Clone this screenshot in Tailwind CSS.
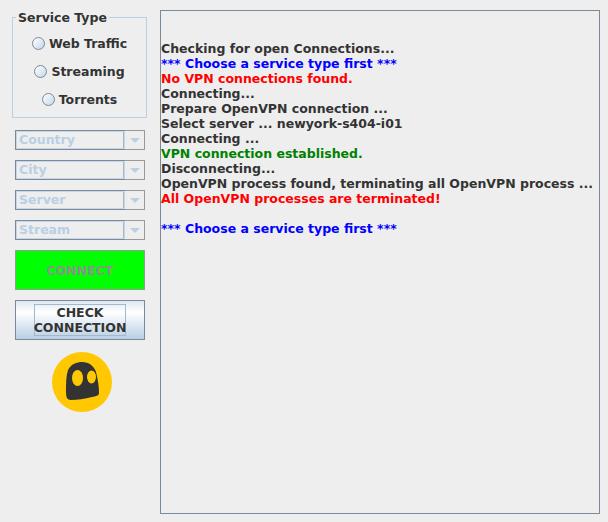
<!DOCTYPE html>
<html lang="en">
<head>
  <meta charset="UTF-8" />
  <title>VPN Client</title>
  <script src="https://cdn.jsdelivr.net/npm/@tailwindcss/browser@4"></script>
</head>
<body class="bg-[#eeeeee] w-[608px] h-[522px] overflow-hidden font-['DejaVu_Sans',sans-serif] font-bold text-[12.5px] leading-[15px] text-[#333333]">
  <div class="flex items-start">

    <aside class="w-[160px] shrink-0 flex flex-col items-center">
      <fieldset class="mt-[10px] ml-[-1px] w-[135px] h-[108px] border border-[#b8cfe5] flex flex-col">
        <legend class="ml-[3px] px-[2px] h-[15px]">Service Type</legend>
        <label class="flex items-center justify-center gap-[4px] mt-[11px] h-[15px]">
          <span class="w-[13px] h-[13px] rounded-full border border-[#7a8a99] bg-gradient-to-br from-[#ffffff] to-[#c4d6e8]"></span>Web Traffic
        </label>
        <label class="flex items-center justify-center gap-[4px] mt-[13px] h-[15px]">
          <span class="w-[13px] h-[13px] rounded-full border border-[#7a8a99] bg-gradient-to-br from-[#ffffff] to-[#c4d6e8]"></span>Streaming
        </label>
        <label class="flex items-center justify-center gap-[4px] mt-[13px] h-[15px]">
          <span class="w-[13px] h-[13px] rounded-full border border-[#7a8a99] bg-gradient-to-br from-[#ffffff] to-[#c4d6e8]"></span>Torrents
        </label>
      </fieldset>

      <div class="mt-[12px] w-[130px] flex flex-col gap-[10px] text-[#b8cfe5]">
        <div class="flex h-[20px] w-[130px]">
          <div class="flex-1 border border-[#7a8a99] border-r-0 pl-[3px] pb-[1px] flex items-center shadow-[inset_0_0_0_1px_#c4d6e8,inset_-1px_0_0_1px_#a3b8cc]">Country</div>
          <div class="w-[20px] border border-[#999999] border-l-0 flex items-center justify-center"><span class="w-0 h-0 border-x-[5px] border-x-transparent border-t-[5px] border-t-[#b8cfe5]"></span></div>
        </div>
        <div class="flex h-[20px] w-[130px]">
          <div class="flex-1 border border-[#7a8a99] border-r-0 pl-[3px] pb-[1px] flex items-center shadow-[inset_0_0_0_1px_#c4d6e8,inset_-1px_0_0_1px_#a3b8cc]">City</div>
          <div class="w-[20px] border border-[#999999] border-l-0 flex items-center justify-center"><span class="w-0 h-0 border-x-[5px] border-x-transparent border-t-[5px] border-t-[#b8cfe5]"></span></div>
        </div>
        <div class="flex h-[20px] w-[130px]">
          <div class="flex-1 border border-[#7a8a99] border-r-0 pl-[3px] pb-[1px] flex items-center shadow-[inset_0_0_0_1px_#c4d6e8,inset_-1px_0_0_1px_#a3b8cc]">Server</div>
          <div class="w-[20px] border border-[#999999] border-l-0 flex items-center justify-center"><span class="w-0 h-0 border-x-[5px] border-x-transparent border-t-[5px] border-t-[#b8cfe5]"></span></div>
        </div>
        <div class="flex h-[20px] w-[130px]">
          <div class="flex-1 border border-[#7a8a99] border-r-0 pl-[3px] pb-[1px] flex items-center shadow-[inset_0_0_0_1px_#c4d6e8,inset_-1px_0_0_1px_#a3b8cc]">Stream</div>
          <div class="w-[20px] border border-[#999999] border-l-0 flex items-center justify-center"><span class="w-0 h-0 border-x-[5px] border-x-transparent border-t-[5px] border-t-[#b8cfe5]"></span></div>
        </div>
      </div>

      <button class="mt-[10px] w-[130px] h-[40px] bg-[#00ff00] border border-[#999999] text-[#8f8f8f] font-bold">CONNECT</button>

      <button class="mt-[10px] w-[130px] h-[40px] border border-[#7a8a99] bg-gradient-to-b from-[#dde8f3] via-[#ffffff] via-30% to-[#b8cfe5] flex items-center justify-center font-bold">
        <span class="block w-[92px] h-[32px] border border-[#a3b8cc] text-center leading-[15px] whitespace-nowrap flex flex-col items-center">
          <span>CHECK</span><span>CONNECTION</span>
        </span>
      </button>

      <svg class="mt-[12px] ml-[4px]" width="60" height="60" viewBox="0 0 60 60">
        <circle cx="30" cy="30" r="30" fill="#ffc800" />
        <path d="M14 40 C14 32 14 24 16 18 C19 12 25 10 30 10 C37 10 42 14 44 20 C46 28 47 35 47 41 C47 44 44 44 40 45 C33 47 25 48 19 48 C15 48 14 45 14 40 Z" fill="#333333" />
        <ellipse cx="25.5" cy="26" rx="5.5" ry="8" fill="#ffc800" />
        <ellipse cx="39.5" cy="25" rx="4.5" ry="6.5" fill="#ffc800" />
      </svg>
    </aside>

    <main class="mt-[10px] w-[440px] h-[504px] shrink-0 border border-[#7a8a99] pt-[30px]">
      <div>Checking for open Connections...</div>
      <div class="text-[#0000ff]">*** Choose a service type first ***</div>
      <div class="text-[#ff0000]">No VPN connections found.</div>
      <div>Connecting...</div>
      <div>Prepare OpenVPN connection ...</div>
      <div>Select server ... newyork-s404-i01</div>
      <div>Connecting ...</div>
      <div class="text-[#008000]">VPN connection established.</div>
      <div>Disconnecting...</div>
      <div>OpenVPN process found, terminating all OpenVPN process ...</div>
      <div class="text-[#ff0000]">All OpenVPN processes are terminated!</div>
      <div class="h-[15px]"></div>
      <div class="text-[#0000ff]">*** Choose a service type first ***</div>
    </main>
  </div>
</body>
</html>
